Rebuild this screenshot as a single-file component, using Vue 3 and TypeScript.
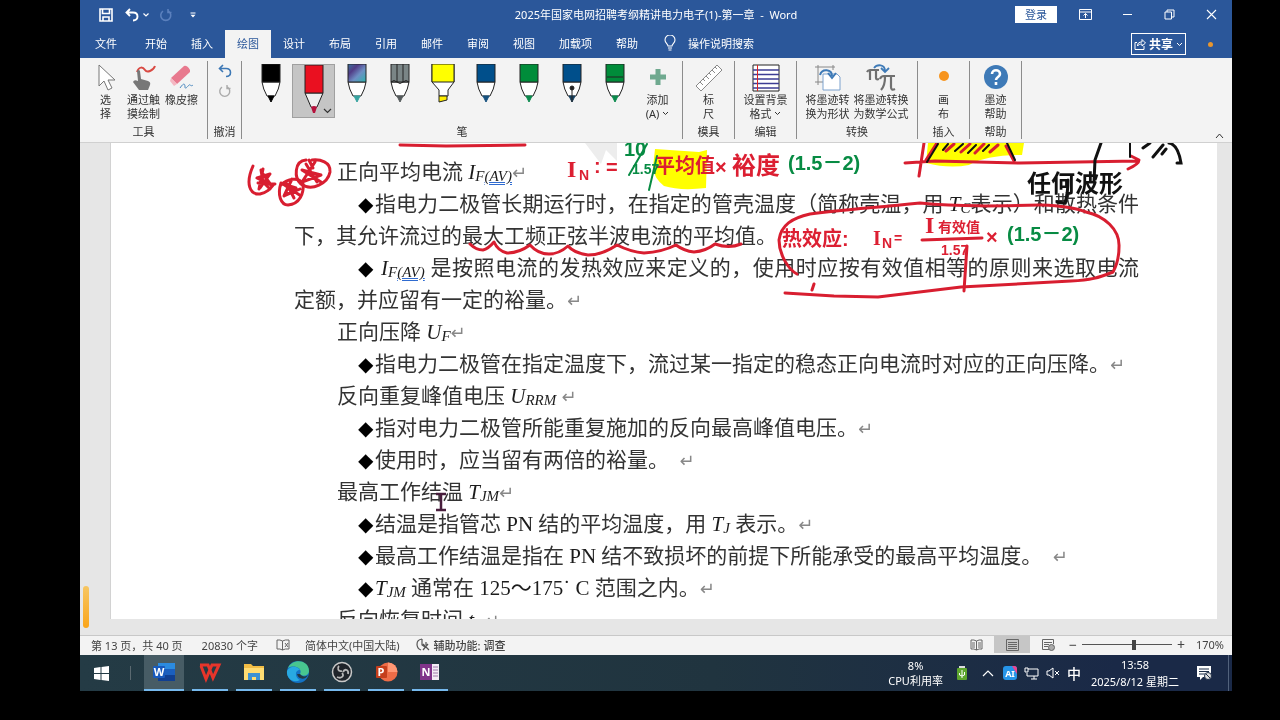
<script setup lang="ts">
import { ref } from 'vue'

interface Pen {
  name: string
  kind: 'pen' | 'pencil' | 'marker' | 'fountain' | 'banded'
  body: string
  tip: string
}
interface Run {
  text: string
  kind?: 'var' | 'sub' | 'linked' | 'latin'
}
interface Line {
  level: 'body' | 'heading' | 'item'
  full?: boolean
  gap?: boolean
  runs: Run[]
  end?: boolean
}

const tabs: string[] = ['文件', '开始', '插入', '绘图', '设计', '布局', '引用', '邮件', '审阅', '视图', '加载项', '帮助']
const activeTab = ref('绘图')
const zoom = ref(58)

const pens: Pen[] = [
  { name: '黑色笔', kind: 'pen', body: '#000000', tip: '#000000' },
  { name: '红色笔', kind: 'pen', body: '#ea1020', tip: '#b5123c' },
  { name: '银河笔', kind: 'pen', body: 'url(#galaxy)', tip: '#36a3a0' },
  { name: '铅笔', kind: 'pencil', body: '#7a8586', tip: '#555b5c' },
  { name: '荧光笔', kind: 'marker', body: '#ffff00', tip: '#ffee00' },
  { name: '蓝色笔', kind: 'pen', body: '#004f8b', tip: '#17527f' },
  { name: '绿色笔', kind: 'pen', body: '#008c3a', tip: '#0b8a4d' },
  { name: '蓝色钢笔', kind: 'fountain', body: '#004f8b', tip: '#17405f' },
  { name: '绿色毛笔', kind: 'banded', body: '#008c3a', tip: '#0b8a4d' },
]
const activePen = ref('红色笔')

const lines: Line[] = [
  { level: 'heading', runs: [{ text: '正向平均电流 ' }, { text: 'I', kind: 'var' }, { text: 'F', kind: 'sub' }, { text: '(AV)', kind: 'linked' }], end: true },
  { level: 'item', full: true, runs: [{ text: '指电力二极管长期运行时，在指定的管壳温度（简称壳温，用 ' }, { text: 'T', kind: 'var' }, { text: 'C', kind: 'sub' }, { text: '表示）和散热条件' }] },
  { level: 'body', runs: [{ text: '下，其允许流过的最大工频正弦半波电流的平均值。' }] },
  { level: 'item', full: true, gap: true, runs: [{ text: 'I', kind: 'var' }, { text: 'F', kind: 'sub' }, { text: '(AV)', kind: 'linked' }, { text: ' 是按照电流的发热效应来定义的，使用时应按有效值相等的原则来选取电流' }] },
  { level: 'body', runs: [{ text: '定额，并应留有一定的裕量。' }], end: true },
  { level: 'heading', runs: [{ text: '正向压降 ' }, { text: 'U', kind: 'var' }, { text: 'F', kind: 'sub' }], end: true },
  { level: 'item', runs: [{ text: '指电力二极管在指定温度下，流过某一指定的稳态正向电流时对应的正向压降。' }], end: true },
  { level: 'heading', runs: [{ text: '反向重复峰值电压 ' }, { text: 'U', kind: 'var' }, { text: 'RRM', kind: 'sub' }, { text: ' ' }], end: true },
  { level: 'item', runs: [{ text: '指对电力二极管所能重复施加的反向最高峰值电压。' }], end: true },
  { level: 'item', runs: [{ text: '使用时，应当留有两倍的裕量。  ' }], end: true },
  { level: 'heading', runs: [{ text: '最高工作结温 ' }, { text: 'T', kind: 'var' }, { text: 'JM', kind: 'sub' }], end: true },
  { level: 'item', runs: [{ text: '结温是指管芯 ' }, { text: 'PN', kind: 'latin' }, { text: ' 结的平均温度，用 ' }, { text: 'T', kind: 'var' }, { text: 'J', kind: 'sub' }, { text: ' 表示。' }], end: true },
  { level: 'item', runs: [{ text: '最高工作结温是指在 ' }, { text: 'PN', kind: 'latin' }, { text: ' 结不致损坏的前提下所能承受的最高平均温度。  ' }], end: true },
  { level: 'item', runs: [{ text: 'T', kind: 'var' }, { text: 'JM', kind: 'sub' }, { text: ' 通常在 ' }, { text: '125～175˙ C', kind: 'latin' }, { text: ' 范围之内。' }], end: true },
  { level: 'heading', runs: [{ text: '反向恢复时间 ' }, { text: 't', kind: 'var' }, { text: '  ' }], end: true },
]

const apps: string[] = ['Word', 'WPS', '文件资源管理器', 'Edge', 'OBS', 'PowerPoint', 'OneNote']
</script>

<template>
  <div class="screen">
    <header class="title">
      <div class="quick">
        <button aria-label="保存"><svg width="14" height="14" viewBox="0 0 14 14"><path d="M1 1h12v12H1zM3.500 1v4.500h7V1M4 13V9h6v4" fill="none" stroke="#fff" stroke-width="1.600" /></svg></button>
        <button aria-label="撤消"><svg width="14" height="14" viewBox="0 0 14 14"><path d="M5 1 1.500 4.500 5 8M2 4.500h6c3 0 4.500 1.800 4.500 4S11 12.500 8 12.500" fill="none" stroke="#fff" stroke-width="1.900" /></svg></button>
        <button class="narrow" aria-label="撤消列表"><svg width="6" height="4" viewBox="0 0 6 4"><path d="m.5.5 2.500 2.500L5.500.5" fill="none" stroke="#fff" stroke-width="1.200" /></svg></button>
        <button class="redo" aria-label="重做"><svg width="14" height="14" viewBox="0 0 14 14"><path d="M4 3.200a5 5 0 1 0 5.500 0M9 1v3.500h3.500" fill="none" stroke="#5b80bd" stroke-width="1.600" /></svg></button>
        <button class="custom" aria-label="自定义"><svg width="6" height="6" viewBox="0 0 6 6"><path d="M.5.500h5v1h-5zM.5 2.800h5L3 5.500z" fill="#fff" /></svg></button>
      </div>
      <h1>2025年国家电网招聘考纲精讲电力电子(1)-第一章&nbsp; -&nbsp; Word</h1>
      <div class="window-tools">
        <button class="login">登录</button>
        <button aria-label="功能区显示选项"><svg width="13" height="11" viewBox="0 0 13 11"><path d="M.5.500h12v10H.500zM.500 3h12M6.500 9V4.500M4.500 6.500l2-2 2 2" fill="none" stroke="#fff" /></svg></button>
        <button aria-label="最小化"><svg width="11" height="11" viewBox="0 0 11 11"><path d="M1 5.500h9" stroke="#fff" /></svg></button>
        <button aria-label="还原"><svg width="11" height="11" viewBox="0 0 11 11"><path d="M1 3h6.500v7H1zM3 3V1h7v7H7.500" fill="none" stroke="#fff" /></svg></button>
        <button aria-label="关闭"><svg width="11" height="11" viewBox="0 0 11 11"><path d="m1 1 9 9M10 1l-9 9" stroke="#fff" stroke-width="1.100" /></svg></button>
      </div>
    </header>

    <nav class="tabs">
      <button v-for="tab in tabs" :key="tab" :class="{ active: tab === activeTab }" @click="activeTab = tab">{{ tab }}</button>
      <button class="tell">
        <svg width="12" height="16" viewBox="0 0 12 16"><path d="M4 11c0-2-3-3-3-6a5 5 0 0 1 10 0c0 3-3 4-3 6zM4 13h4M4.500 15h3" fill="none" stroke="#fff" stroke-width="1.100" /></svg>
        操作说明搜索
      </button>
      <div class="share-area">
        <button class="share">
          <svg width="12" height="12" viewBox="0 0 12 12"><path d="M3 4.500H1v7h9V8M3.500 8c0-3 1.500-4 4.500-4V1.500L11.500 5 8 8V6C6 6 4.500 6.500 3.500 8z" fill="none" stroke="#fff" /></svg>
          共享
          <svg width="7" height="5" viewBox="0 0 7 5"><path d="m1 1 2.500 2.500L6 1" fill="none" stroke="#fff" /></svg>
        </button>
        <i class="dot"></i>
      </div>
    </nav>

    <section class="ribbon" aria-label="绘图">
      <svg class="defs" width="0" height="0" aria-hidden="true"><defs><linearGradient id="galaxy" x1="0" y1="0" x2="1" y2="1"><stop offset="0" stop-color="#39739c" /><stop offset=".3" stop-color="#513c86" /><stop offset=".6" stop-color="#6e8fc4" /><stop offset="1" stop-color="#2db3ad" /></linearGradient></defs></svg>
      <div class="group tools">
        <div class="items">
          <button class="tool w-select">
            <svg width="20" height="28" viewBox="0 0 20 28"><path d="M3 1v21l5-5 4 9 4-2-4-8h7z" fill="#fff" stroke="#777" /></svg>
            <span>选<br>择</span>
          </button>
          <button class="tool w-touch">
            <svg width="28" height="28" viewBox="0 0 28 28"><path d="M7 8c2-6 6-5 8-2s8 1 10-4" fill="none" stroke="#d94a43" stroke-width="2" /><path d="M7 7q2-2 3 0l1 8 7 2q3 1 2 4l-2 5H9l-6-8q1-3 5-1z" fill="#777" /></svg>
            <span>通过触<br>摸绘制</span>
          </button>
          <button class="tool w-erase">
            <svg width="28" height="28" viewBox="0 0 28 28"><path d="m3 14 13-12q3-1 6 4v2L9 20z" fill="#e8798e" /><path d="m3 14-1 3 4 5 3-2z" fill="#f5b7c2" /><path d="M12 24c4-6 5-4 5-1s3-1 4-2 2 2 4 0" fill="none" stroke="#4d8ac0" /></svg>
            <span>橡皮擦</span>
          </button>
        </div>
        <h2>工具</h2>
      </div>
      <div class="group undo">
        <div class="items">
          <button aria-label="撤消墨迹"><svg width="14" height="14" viewBox="0 0 14 14"><path d="M5 1 1.500 4.500 5 8M2 4.500h6c3 0 4.500 1.800 4.500 4S11 12.500 8 12.500" fill="none" stroke="#3d78b5" stroke-width="1.600" /></svg></button>
          <button aria-label="恢复墨迹"><svg width="14" height="14" viewBox="0 0 14 14"><path d="M4 3.200a5 5 0 1 0 5.500 0M9 1v3.500h3.500" fill="none" stroke="#aaa" stroke-width="1.400" /></svg></button>
        </div>
        <h2>撤消</h2>
      </div>
      <div class="group pens">
        <div class="items">
          <button v-for="pen in pens" :key="pen.name" class="pen" :class="{ chosen: pen.name === activePen }" :aria-label="pen.name" @click="activePen = pen.name">
            <svg width="26" height="50" viewBox="0 0 26 50">
              <g v-if="pen.kind === 'marker'" stroke="#222">
                <path d="M2 0v18l7 8v6h9v-6l6-8V0" fill="#fff" /><path d="M2 0v18h22V0z" :fill="pen.body" /><path d="M9 32v6l8-2v-4z" :fill="pen.tip" />
              </g>
              <g v-else-if="pen.name === activePen" stroke="#222">
                <path d="M4 28l6 14q3 3 6 0l6-14z" fill="#eee" /><path d="M4 0v28h18V0z" :fill="pen.body" /><path d="M10 42q3-2 6 0l-2 6h-2z" :fill="pen.tip" stroke="none" />
              </g>
              <g v-else stroke="#222">
                <path d="M4 18q1 7 5 14h8q4-7 5-14z" fill="#fff" />
                <path d="M4 0v18h18V0z" :fill="pen.body" />
                <path d="M10 32h6l-3 6z" :fill="pen.tip" :stroke="pen.tip" />
                <path v-if="pen.kind === 'pencil'" d="M10 0v18M16 0v18M4 18q3-3 6 0 3 3 6 0 3-3 6 0" fill="none" />
                <path v-if="pen.kind === 'fountain'" d="M13 24v14M11 24a2 2 0 1 0 4 0 2 2 0 1 0-4 0" fill="#222" />
                <path v-if="pen.kind === 'banded'" d="M5 13h16" />
              </g>
            </svg>
            <svg v-if="pen.name === activePen" class="pick" width="9" height="6" viewBox="0 0 9 6"><path d="m1 1 3.500 3.500L8 1" fill="none" stroke="#333" stroke-width="1.200" /></svg>
          </button>
          <button class="tool w-add">
            <svg width="18" height="28" viewBox="0 0 18 28"><path d="M6.500 5h5v5.500H17v5h-5.500V21h-5v-5.500H1v-5h5.500z" fill="#6fa98f" /></svg>
            <span>添加<br>(A) <svg width="7" height="5" viewBox="0 0 7 5"><path d="m1 1 2.500 2.500L6 1" fill="none" stroke="#333" /></svg></span>
          </button>
        </div>
        <h2>笔</h2>
      </div>
      <div class="group ruler">
        <div class="items">
          <button class="tool">
            <svg width="28" height="28" viewBox="0 0 28 28"><path d="M1 22 22 1l5 5L6 27zM5 18l3 3M8 15l2 2M11 12l3 3M14 9l2 2M17 6l3 3M20 3l2 2" fill="#fff" stroke="#8a8a8a" /></svg>
            <span>标<br>尺</span>
          </button>
        </div>
        <h2>模具</h2>
      </div>
      <div class="group edit">
        <div class="items">
          <button class="tool">
            <svg width="28" height="28" viewBox="0 0 28 28"><path d="M1 1h26v26H1z" fill="#fff" stroke="#222" /><path d="M1 6h26M1 10.500h26M1 15h26M1 19.500h26M1 24h26" stroke="#3d3d94" stroke-width="1.300" /><path d="M5.500 1v26" stroke="#d22" /></svg>
            <span>设置背景<br>格式 <svg width="7" height="5" viewBox="0 0 7 5"><path d="m1 1 2.500 2.500L6 1" fill="none" stroke="#333" /></svg></span>
          </button>
        </div>
        <h2>编辑</h2>
      </div>
      <div class="group convert">
        <div class="items">
          <button class="tool">
            <svg width="28" height="28" viewBox="0 0 28 28"><path d="M4 1v20M1 3h20M1 18h10M19 1v5" fill="none" stroke="#888" /><path d="M9 10h14l3 3v13H9z" fill="#fff" stroke="#7da2ce" /><path d="M6 11c2-7 12-6 12 1M14 9l4 5 4-5" fill="none" stroke="#3e7ab7" stroke-width="2" /></svg>
            <span>将墨迹转<br>换为形状</span>
          </button>
          <button class="tool">
            <svg width="30" height="28" viewBox="0 0 30 28"><path d="M1 8q1-2 3-2h9M4 7v9M10 7v7q0 2 3 1M14 15q1-3 4-3h11M19 13c0 7-1 10-4 13M25 13v10q0 4 4 2" fill="none" stroke="#707070" stroke-width="2.200" /><path d="M8 4c3-4 11-4 11 3M15 4l4 4 4-4" fill="none" stroke="#3e7ab7" stroke-width="1.800" /></svg>
            <span>将墨迹转换<br>为数学公式</span>
          </button>
        </div>
        <h2>转换</h2>
      </div>
      <div class="group canvas-group">
        <div class="items">
          <button class="tool">
            <svg width="28" height="28" viewBox="0 0 28 28"><circle cx="14" cy="12" r="5" fill="#f7941d" /></svg>
            <span>画<br>布</span>
          </button>
        </div>
        <h2>插入</h2>
      </div>
      <div class="group help">
        <div class="items">
          <button class="tool">
            <svg width="28" height="28" viewBox="0 0 28 28"><circle cx="14" cy="13" r="12" fill="#3e7ab7" /><path d="M10 10c0-5 8-5 8 0 0 3-4 3-4 6M14 18v3" fill="none" stroke="#fff" stroke-width="2.600" /></svg>
            <span>墨迹<br>帮助</span>
          </button>
        </div>
        <h2>帮助</h2>
      </div>
      <button class="collapse" aria-label="折叠功能区"><svg width="9" height="6" viewBox="0 0 9 6"><path d="m1 5 3.500-4L8 5" fill="none" stroke="#333" /></svg></button>
    </section>

    <main class="workspace">
      <i class="side-mark"></i>
      <article class="page">
        <p v-for="(line, n) in lines" :key="n" :class="[line.level, { full: line.full }]">
          <span v-if="line.level === 'item'" class="bullet" :class="{ spaced: line.gap }">◆</span><span class="words"><span v-for="(run, k) in line.runs" :key="k" :class="run.kind">{{ run.text }}</span><span v-if="line.end" class="mark">↵</span></span>
        </p>
      </article>
      <svg class="ink" width="1152" height="477" viewBox="80 143 1152 477">
        <path d="m585 143 16 21 5-14 11 11V143z" fill="#ededed" />
        <path class="highlight" d="M928 143h96l-2 12q-36 0-53 10-20 4-43-2zM655 149l44 3 8-2-1 38q-26 3-42-2-10-8-11-18z" fill="#ffff00" />
        <g fill="none" stroke="#d81e30" stroke-width="3" stroke-linecap="round" stroke-linejoin="round">
          <path d="m400 145 46 1 79-1" />
          <path d="M253 166c-8 18-3 29 7 28 8-2 10-5 14-10M263 169l-4 20M263 174l8 11-14-7 13-4-10 14zM261 170l2 12 7 7M258 183l17 1" />
          <path d="M281 183c-4 12 0 22 7 22 12-1 16-12 15-21-4-8-16-5-22 1M287 184l7 14M292 179l-8 17 12-8-13-4 18 12M284 196l16-7" />
          <path d="M306 160c-12 1-12 18-5 24 11 8 27-1 29-12 1-10-10-13-18-12M306 164l11 18M315 162l-13 20 19-7-19-5 19 12M309 160l4 8" />
          <path d="M470 244q6 6 13 6 5-1 11-8 4 9 13 11 12 0 23-8 8 9 19 9 10 0 19-8 6 7 20 9 14 0 29-10 14 7 27 8 18-1 32-8 8 6 18 7 12-1 21-8 14 5 26 0" />
          <path d="M797 274c-8-4-18-19-18-34 2-15 13-22 31-26 38-5 63-6 110-11 40 4 80 3 121 2q30 1 45 7c18 4 34 17 33 35q0 14-6 25c-15 6-22 8-42 9l-110 6-83 10-44-1-49-3" />
          <path d="m905 163 30-2 85 2 117-2M1131 156l8 4q0 4-11 9M924 143l-5 33M814 284l-2 6" />
          <path d="m922 240 60-2M967 246l-3 45" />
          <path d="M926 160l11-17M1006 146l8 15M946 151l8-7M961 152l9-8M975 153l9-9M990 152l8-7" />
        </g>
        <g fill="none" stroke="#111" stroke-width="2" stroke-linecap="round">
          <path d="m927 162 11-18M943 150l5-6M955 151l8-7M968 153l8-8M983 151l6-6M1007 143l8 17" />
          <path stroke-width="3" d="M1101 143l-6 17-1 22M1143 148l7-5M1153 157l10-12M1162 154l4-5M1169 143c6 1 10 8 12 20h-4M1068 180q0 13-3 23l-8-1" /><path d="M1130 143v14" />
        </g>
        <g fill="none" stroke="#078b43" stroke-width="2" stroke-linecap="round"><path d="m647 144-18 31M657 156l-8 34" /></g>
        <g class="hand red">
          <text class="large serif" x="567" y="177">I</text><text class="small" x="579" y="180">N</text><text class="mid" x="594" y="173">:</text><text class="mid" x="606" y="174">=</text>
          <text class="mid" x="655" y="173">平均值</text><text class="mid" x="715" y="174">×</text><text class="large" x="732" y="174">裕度</text>
          <text class="mid" x="782" y="246">热效应:</text><text class="mid serif" x="873" y="245">I</text><text class="small" x="882" y="248">N</text><text class="small" x="894" y="243">=</text>
          <text class="large serif" x="925" y="233">I</text><text class="small" x="938" y="232">有效值</text><text class="small" x="941" y="255">1.57</text><text class="mid" x="986" y="244">×</text>
        </g>
        <g class="hand green">
          <text class="mid" x="624" y="156">10</text><text class="small" x="632" y="174">1.57</text><text class="mid" x="788" y="170">(1.5－2)</text><text class="mid" x="1007" y="241">(1.5－2)</text>
        </g>
        <g class="hand black"><text class="large" x="1027" y="192">任何波形</text></g>
        <path d="M436 494h10M441 494v16M436 510h10" stroke="#481d3c" stroke-width="2.500" />
      </svg>
    </main>

    <footer class="status">
      <span class="count">第 13 页，共 40 页</span>
      <span class="words-count">20830 个字</span>
      <svg class="proof" width="14" height="12" viewBox="0 0 14 12"><path d="M6.500 2Q4 .500 1 1v9q3-.500 5.500 1zM6.500 2Q9 .500 13 1v9q-4-.500-6.500 1M9 4l3 4M12 4 9 8" fill="none" stroke="#666" /></svg>
      <span class="lang">简体中文(中国大陆)</span>
      <svg width="14" height="13" viewBox="0 0 14 13"><path d="M6 1C-1 2 0 10 5 12M6 1v6l3 2M7 6l6 6M12 6l-5 6M10 4v3" fill="none" stroke="#555" stroke-width="1.200" /></svg>
      <span class="access">辅助功能: 调查</span>
      <div class="view">
        <button aria-label="阅读视图"><svg width="13" height="12" viewBox="0 0 13 12"><path d="M6.500 2Q4 .500 1 1v9q3-.500 5.500 1Q9 9.500 12 10V1q-3-.500-5.500 1v9M2 4h3M2 6h3M2 8h3M8 4h3M8 6h3M8 8h3" fill="none" stroke="#666" /></svg></button>
        <button class="on" aria-label="页面视图"><svg width="13" height="12" viewBox="0 0 13 12"><path d="M.5.500h12v11H.500zM2 3.500h9M2 5.500h9M2 7.500h9M2 9.500h9" fill="none" stroke="#666" /></svg></button>
        <button aria-label="Web 版式视图"><svg width="13" height="12" viewBox="0 0 13 12"><path d="M7 10.500H.500V.500h11V5M2 3.500h8M2 5.500h5M2 7.500h4" fill="none" stroke="#666" /><circle cx="9.500" cy="8.500" r="3" fill="#aaa" stroke="#666" /></svg></button>
      </div>
      <button class="step" aria-label="缩小">−</button>
      <input v-model="zoom" type="range" min="0" max="100" aria-label="缩放">
      <button class="step" aria-label="放大">+</button>
      <span class="percent">170%</span>
    </footer>

    <footer class="taskbar">
      <button class="start" aria-label="开始"><svg width="15" height="15" viewBox="0 0 15 15"><path d="m0 2 6.500-1v6H0zM7.500 1 15 0v7H7.500zM0 8h6.500v6L0 13zM7.500 8H15v7l-7.500-1z" fill="#fff" /></svg></button>
      <i class="divider"></i>
      <div class="apps">
        <button v-for="(app, n) in apps" :key="app" :class="{ current: n === 0 }" :aria-label="app">
          <svg width="24" height="22" viewBox="0 0 24 22">
            <g v-if="n === 0"><path d="M6 2h17v18H6z" fill="#2b8be0" /><path d="M6 8h17v12H6z" fill="#1b5fbe" /><path d="M6 14h17v6H6z" fill="#103f91" /><rect x="1" y="5" width="12" height="12" rx="1" fill="#185abd" /><text x="7" y="15">W</text></g>
            <g v-else-if="n === 1" fill="none" stroke="#e6352b" stroke-width="3"><path d="M2 4h8l5 13 6-13h-7l-6 14L3 5" /></g>
            <g v-else-if="n === 2"><path d="M2 3h7l2 2h11v14H2z" fill="#f1bd45" /><path d="M2 7h20v12H2z" fill="#ffdc72" /><path d="M6 12h12v7h-4v-3h-4v3H6z" fill="#3c91d3" /></g>
            <g v-else-if="n === 3"><circle cx="12" cy="11" r="11" fill="#1472c4" /><path d="M2 7C6-3 23-2 23 10c0 5-7 6-9 3 3-5-5-10-12-6z" fill="#48c58f" /><path d="M1 10C4 4 12 5 14 9c-6 0-5 8 0 10-7 4-14-2-13-9z" fill="#28a9e2" /><path d="M14 13c2 3 6 3 8 1-2 5-10 5-11-1z" fill="#243943" /></g>
            <g v-else-if="n === 4"><circle cx="12" cy="11" r="9.500" fill="#20242a" stroke="#c8c8c8" stroke-width="1.500" /><path d="M12 10c-4 1-5-3-3-5M13 11c2-4 6-2 5 2M12 12c3 3-1 6-5 4" fill="none" stroke="#b8b8b8" stroke-width="1.800" /></g>
            <g v-else-if="n === 5"><circle cx="14" cy="11" r="9.500" fill="#ed6c47" /><path d="M14 1.500a9.500 9.500 0 0 1 9.500 9.500H14z" fill="#ff9774" /><rect x="2" y="5" width="11" height="12" rx="1" fill="#c43e1c" /><text x="7" y="15">P</text></g>
            <g v-else><path d="M8 3h13v16H8z" fill="#f3edf5" /><path d="M15 6h5M15 9h5M15 12h5M15 15h5" stroke="#a079aa" /><rect x="2" y="3" width="12" height="16" fill="#81348a" /><text x="8" y="15">N</text></g>
          </svg>
        </button>
      </div>
      <div class="cpu">8%<br>CPU利用率</div>
      <div class="tray">
        <svg width="10" height="14" viewBox="0 0 10 14"><path d="M2 0h6v3H2z" fill="#ddd" /><rect y="2" width="10" height="12" rx="1" fill="#5da52e" /><path d="M5 4v8M2.500 7v2L5 10l2.500-1V6" fill="none" stroke="#fff" /></svg>
        <svg width="12" height="8" viewBox="0 0 12 8"><path d="m1 7 5-5 5 5" fill="none" stroke="#fff" stroke-width="1.200" /></svg>
        <svg width="14" height="14" viewBox="0 0 14 14"><rect width="14" height="14" rx="3" fill="#2695e9" /><path d="M9 0h2q3 0 3 3v5z" fill="#ec438f" /><text class="ai" x="7" y="11">AI</text></svg>
        <svg width="15" height="13" viewBox="0 0 15 13"><path d="M4 2h10v7H3V6M7 12h6M10 9v3M1 1h3v4H1z" fill="none" stroke="#fff" /></svg>
        <svg width="14" height="12" viewBox="0 0 14 12"><path d="M1 4h2l4-3v10L3 8H1zM9 4l4 4M13 4 9 8" fill="none" stroke="#fff" /></svg>
        <span class="ime">中</span>
      </div>
      <div class="clock">13:58<br>2025/8/12 星期二</div>
      <button class="notice" aria-label="通知"><svg width="16" height="16" viewBox="0 0 16 16"><path d="M1 1h14v11H7l-3 3v-3H1z" fill="#fff" /><path d="M3 4h10M3 6.500h10M3 9h6" stroke="#1d2d46" /><circle cx="12" cy="11" r="3.500" fill="#ddd" stroke="#1d2d46" /><path d="m10 9 4 4" stroke="#1d2d46" /></svg></button>
    </footer>
  </div>
</template>

<style>
body { background: #000; }
</style>

<style scoped>
* { box-sizing: border-box; }
.screen { height: 100vh; min-height: 480px; padding: 0 48px 29px 80px; display: flex; flex-direction: column; overflow: hidden; background: #000; color: #333; font-family: "Noto Sans", "Noto Sans CJK SC", sans-serif; font-size: 11px; }
button { margin: 0; padding: 0; border: 0; background: none; color: inherit; font: inherit; display: flex; align-items: center; justify-content: center; }
h1, h2, p { margin: 0; font-weight: 400; }
svg { display: block; flex: none; }

.title { height: 30px; flex: none; display: grid; grid-template-columns: 1fr auto 1fr; align-items: center; padding-bottom: 2px; background: #2b579a; color: #fff; }
.quick { display: flex; align-items: center; padding: 2px 0 0 19px; gap: 12px; }
.quick .narrow { margin-left: -8px; }
.quick .redo { margin-left: -2px; }
.quick .custom { margin-left: 5px; }
.title h1 { font-size: 11px; white-space: nowrap; }
.window-tools { display: flex; justify-content: flex-end; align-items: center; height: 28px; }
.window-tools button { width: 42px; }
.window-tools .login { height: 17px; margin-right: 7px; background: #fff; color: #2b579a; }

.tabs { height: 28px; flex: none; display: flex; background: #2b579a; color: #fff; }
.tabs button { padding: 0 12px 2px; white-space: nowrap; }
.tabs button:first-child { margin: 0 4px 0 3px; }
.tabs .active { background: #f3f3f3; color: #2b579a; }
.tabs .tell { gap: 12px; padding-left: 14px; }
.share-area { margin-left: auto; display: flex; align-items: center; gap: 18px; padding-right: 19px; }
.tabs .share { height: 22px; padding: 0 2px; gap: 3px; border: 1px solid #fff; font-weight: 700; font-size: 12px; }
.dot { width: 5px; height: 5px; border-radius: 50%; background: #e8962e; }

.ribbon { height: 85px; flex: none; display: flex; position: relative; padding: 3px 0; background: #f3f3f3; border-bottom: 1px solid #d0d0d0; }
.defs { position: absolute; }
.group { display: flex; flex-direction: column; border-right: 1px solid #8c8c8c; flex: none; }
.items { flex: 1; display: flex; align-items: flex-start; justify-content: center; padding-top: 3px; }
.group h2 { font-size: 11px; line-height: 14px; text-align: center; }
.tool { flex-direction: column; justify-content: flex-start; gap: 1px; white-space: nowrap; line-height: 14px; }
.tool span svg { display: inline-block; vertical-align: 2px; }
.tools { width: 128px; }
.w-select { width: 34px; }
.w-touch { width: 42px; }
.w-erase { width: 34px; }
.undo { width: 34px; }
.undo .items { flex-direction: column; align-items: center; justify-content: flex-start; gap: 6px; }
.pens { width: 441px; }
.pens .items { justify-content: flex-start; padding-left: 7px; }
.pen { position: relative; width: 43px; height: 54px; align-items: flex-start; }
.chosen { background: #c5c5c5; border: 1px solid #a0a0a0; }
.pick { position: absolute; right: 2px; bottom: 3px; }
.w-add { width: 43px; }
.ruler, .canvas-group, .help { width: 52px; }
.edit { width: 62px; }
.convert { width: 121px; }
.convert .items { gap: 4px; }
.collapse { position: absolute; right: 8px; bottom: 3px; }

.workspace { flex: 1; min-height: 0; position: relative; display: flex; padding: 0 15px 16px 30px; background: #e6e6e6; overflow: hidden; }
.side-mark { position: absolute; left: 3px; bottom: 7px; width: 6px; height: 42px; border-radius: 3px; background: linear-gradient(#f7c662, #faa51a); }
.page { flex: 1; min-width: 0; padding: 13px 78px 0 183px; overflow: hidden; background: #fff; border-left: 1px solid #d2d2d2; color: #333; font-family: "Liberation Serif", "Noto Sans CJK SC", serif; font-size: 21px; font-weight: 300; line-height: 32px; }
.page p { display: flex; height: 32px; white-space: pre; }
.heading { padding-left: 43px; }
.item { padding-left: 64px; }
.words { flex: none; }
.full .words { flex: 1; min-width: 0; white-space: pre-wrap; text-align: justify; text-align-last: justify; }
.bullet { flex: none; width: 17px; font-family: "DejaVu Sans", sans-serif; font-size: 20px; color: #000; }
.spaced { margin-right: 6px; }
.var, .sub, .linked, .latin { font-weight: 400; color: #1c1c1c; }
.var, .sub, .linked { font-style: italic; }
.sub, .linked { font-size: 15px; line-height: 16px; vertical-align: -2px; }
.linked { text-decoration: underline double #2f6bd0 1px; }
.mark { font-family: "DejaVu Sans", sans-serif; font-size: 18px; line-height: 16px; color: #888; }
.ink { position: absolute; left: 0; top: 0; pointer-events: none; }
.highlight { mix-blend-mode: multiply; }
.hand { font-family: "Liberation Sans", "Noto Sans CJK SC", sans-serif; font-weight: 700; }
.red { fill: #dc1f32; }
.green { fill: #078b43; }
.black { fill: #111; }
.large { font-size: 24px; }
.mid { font-size: 20px; }
.small { font-size: 14px; }
.serif { font-family: "Liberation Serif", serif; }

.status { height: 20px; flex: none; display: flex; align-items: center; padding: 0 8px 2px 11px; background: #f3f3f3; border-top: 1px solid #c8c8c8; color: #444; white-space: nowrap; }
.words-count { margin-left: 19px; }
.proof { margin: 0 15px 0 18px; }
.lang { margin-right: 16px; }
.access { margin-left: 4px; font-weight: 500; }
.view { display: flex; margin-left: auto; align-self: stretch; }
.view button { width: 36px; }
.view .on { background: #c6c6c6; }
.step { width: 14px; font-size: 14px; }
.status input { appearance: none; width: 90px; height: 12px; margin: 0 2px; background: linear-gradient(#555, #555) center / 100% 1px no-repeat; }
.status input::-webkit-slider-thumb { appearance: none; width: 4px; height: 10px; background: #444; }
.percent { width: 36px; text-align: right; }

.taskbar { height: 36px; flex: none; display: flex; align-items: center; background: linear-gradient(90deg, #243b45 0%, #20343f 55%, #1a2947 90%); color: #fff; line-height: 15px; white-space: nowrap; }
.start { width: 43px; height: 36px; }
.divider { width: 1px; height: 14px; margin: 0 13px 0 7px; background: #5a6970; }
.apps { display: flex; gap: 8px; align-self: stretch; }
.apps button { width: 36px; border-bottom: 2px solid #76b9ed; }
.apps .current { width: 40px; background: #475c65; }
.apps text { fill: #fff; font-family: "Open Sans", sans-serif; font-size: 11px; font-weight: 700; text-anchor: middle; }
.cpu { margin-left: auto; text-align: center; }
.tray { display: flex; align-items: center; gap: 7px; margin: 0 10px 0 14px; }
.tray svg:nth-child(2) { margin: 0 2px 0 8px; }
.ai { fill: #fff; font-size: 9px; font-weight: 700; text-anchor: middle; }
.ime { font-size: 14px; font-weight: 500; }
.clock { text-align: center; line-height: 17px; }
.notice { width: 50px; height: 36px; border-right: 1px solid #52627c; margin-right: 3px; }
</style>
